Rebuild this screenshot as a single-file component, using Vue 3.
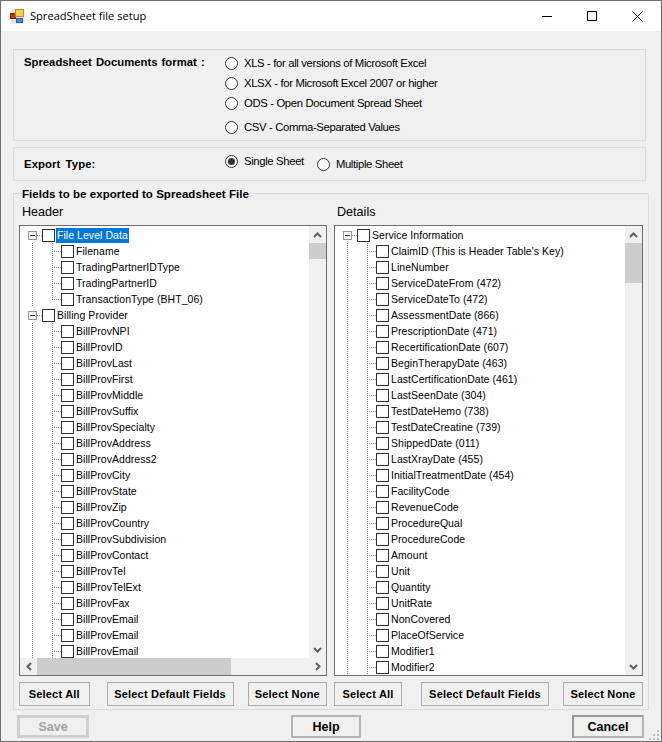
<template>
  <div class="window">
    <header class="titlebar">
      <svg class="app-icon" width="15" height="15" viewBox="0 0 15 15" aria-hidden="true">
        <rect x="0.5" y="0.5" width="14" height="14" fill="#e4e4e4" />
        <rect x="0.5" y="4.5" width="5" height="5" fill="#c8322a" stroke="#7a1f1a" />
        <rect x="5.5" y="0.5" width="8" height="7" fill="#f5cf4f" stroke="#b68a1e" />
        <rect x="6.5" y="9.5" width="6" height="4" fill="#4f86d8" stroke="#2d5ea8" />
      </svg>
      <span class="title">SpreadSheet file setup</span>
      <div class="controls">
        <svg width="10" height="10" viewBox="0 0 10 10" aria-hidden="true"><path d="M0 5.5H10" stroke="#000" fill="none" /></svg>
        <svg width="10" height="10" viewBox="0 0 10 10" aria-hidden="true"><rect x="0.5" y="0.5" width="9" height="9" stroke="#000" fill="none" /></svg>
        <svg width="11" height="11" viewBox="0 0 11 11" aria-hidden="true"><path d="M0.5 0.5L10.5 10.5M10.5 0.5L0.5 10.5" stroke="#000" fill="none" /></svg>
      </div>
    </header>

    <main class="content">
      <section class="group format">
        <div class="group-label">Spreadsheet Documents format :</div>
        <div class="radios">
          <label v-for="f in formats" :key="f.name" class="radio" :class="f.cls">
            <span class="dot"></span>{{ f.name }}
          </label>
        </div>
      </section>

      <section class="group export">
        <div class="group-label">Export Type:</div>
        <div class="export-opts">
          <label class="radio"><span class="dot on"></span>Single Sheet</label>
          <label class="radio lower"><span class="dot"></span>Multiple Sheet</label>
        </div>
      </section>

      <fieldset class="fields">
        <legend>Fields to be exported to Spreadsheet File</legend>
        <div class="columns">
          <div class="col">
            <div class="col-title">Header</div>
            <div class="tree">
              <div class="tree-body">
                <div v-for="(row, i) in headerRows" :key="i" class="row" :class="{ root: row.root }">
                  <template v-if="row.root">
                    <span class="expander"></span>
                    <span class="stub"></span>
                  </template>
                  <template v-else>
                    <span class="guide"></span>
                    <span class="elbow" :class="{ last: row.last }"></span>
                  </template>
                  <span class="check"></span>
                  <span class="text" :class="{ selected: row.selected }">{{ row.text }}</span>
                </div>
              </div>
              <div class="vscroll">
                <span class="arrow"><svg width="9" height="6" viewBox="0 0 9 6"><path d="M1 5L4.5 1.5L8 5" /></svg></span>
                <span class="thumb short"></span>
                <span class="spacer"></span>
                <span class="arrow"><svg width="9" height="6" viewBox="0 0 9 6"><path d="M1 1L4.5 4.5L8 1" /></svg></span>
              </div>
              <div class="hscroll">
                <span class="harrow"><svg width="6" height="9" viewBox="0 0 6 9"><path d="M5 1L1.5 4.5L5 8" /></svg></span>
                <span class="hthumb"></span>
                <span class="spacer"></span>
                <span class="harrow"><svg width="6" height="9" viewBox="0 0 6 9"><path d="M1 1L4.5 4.5L1 8" /></svg></span>
              </div>
            </div>
            <div class="actions left">
              <button class="btn all">Select All</button>
              <button class="btn def">Select Default Fields</button>
              <button class="btn none">Select None</button>
            </div>
          </div>

          <div class="col">
            <div class="col-title">Details</div>
            <div class="tree details">
              <div class="tree-body">
                <div v-for="(row, i) in detailRows" :key="i" class="row" :class="{ root: row.root }">
                  <template v-if="row.root">
                    <span class="expander"></span>
                    <span class="stub"></span>
                  </template>
                  <template v-else>
                    <span class="guide"></span>
                    <span class="elbow"></span>
                  </template>
                  <span class="check"></span>
                  <span class="text">{{ row.text }}</span>
                </div>
              </div>
              <div class="vscroll">
                <span class="arrow"><svg width="9" height="6" viewBox="0 0 9 6"><path d="M1 5L4.5 1.5L8 5" /></svg></span>
                <span class="thumb long"></span>
                <span class="spacer"></span>
                <span class="arrow"><svg width="9" height="6" viewBox="0 0 9 6"><path d="M1 1L4.5 4.5L8 1" /></svg></span>
              </div>
            </div>
            <div class="actions right">
              <button class="btn all2">Select All</button>
              <button class="btn def">Select Default Fields</button>
              <button class="btn none">Select None</button>
            </div>
          </div>
        </div>
      </fieldset>

      <footer class="footer">
        <button class="fbtn save" disabled>Save</button>
        <button class="fbtn help">Help</button>
        <button class="fbtn cancel">Cancel</button>
      </footer>
    </main>

    <svg class="grip" width="11" height="11" viewBox="0 0 11 11" aria-hidden="true">
      <path d="M8 0h2v2H8zM4 4h2v2H4zM8 4h2v2H8zM0 8h2v2H0zM4 8h2v2H4zM8 8h2v2H8z" fill="#bdbdbd" />
    </svg>
  </div>
</template>

<script setup>
const formats = [
  { name: "XLS - for all versions of Microsoft Excel" },
  { name: "XLSX - for Microsoft Excel 2007 or higher" },
  { name: "ODS - Open Document Spread Sheet" },
  { name: "CSV - Comma-Separated Values", cls: "gap" },
];

const billProv = [
  "NPI", "ID", "Last", "First", "Middle", "Suffix", "Specialty", "Address", "Address2",
  "City", "State", "Zip", "Country", "Subdivision", "Contact", "Tel", "TelExt", "Fax",
  "Email", "Email", "Email",
].map((s) => ({ text: "BillProv" + s }));

const headerRows = [
  { text: "File Level Data", root: true, selected: true },
  { text: "Filename" },
  { text: "TradingPartnerIDType" },
  { text: "TradingPartnerID" },
  { text: "TransactionType (BHT_06)", last: true },
  { text: "Billing Provider", root: true },
  ...billProv,
];

const detailRows = [
  { text: "Service Information", root: true },
  ...[
    "ClaimID (This is Header Table's Key)", "LineNumber", "ServiceDateFrom (472)", "ServiceDateTo (472)",
    "AssessmentDate (866)", "PrescriptionDate (471)", "RecertificationDate (607)", "BeginTherapyDate (463)",
    "LastCertificationDate (461)", "LastSeenDate (304)", "TestDateHemo (738)", "TestDateCreatine (739)",
    "ShippedDate (011)", "LastXrayDate (455)", "InitialTreatmentDate (454)", "FacilityCode", "RevenueCode",
    "ProcedureQual", "ProcedureCode", "Amount", "Unit", "Quantity", "UnitRate", "NonCovered",
    "PlaceOfService", "Modifier1", "Modifier2",
  ].map((text) => ({ text })),
];
</script>

<style>
html, body { margin: 0; background: #f0f0f0; }
</style>

<style scoped>
.window {
  position: relative;
  box-sizing: border-box;
  width: 662px;
  height: 742px;
  border: 1px solid #6f6f6f;
  background: #f0f0f0;
  font-family: "Liberation Sans", Arial, sans-serif;
  font-size: 11.3px;
  color: #000;
  overflow: hidden;
}

.titlebar {
  display: flex;
  align-items: center;
  height: 30px;
  background: #fff;
  padding-left: 9px;
}
.app-icon { margin-right: 5px; }
.title { font-family: "Open Sans", sans-serif; font-size: 11.1px; margin-top: -1px; }
.controls {
  display: flex;
  align-items: center;
  margin-left: auto;
  gap: 35px;
  padding-right: 18px;
}

.content { padding: 18px 12px 0 12px; }

.group {
  box-sizing: border-box;
  width: 633px;
  border: 1px solid #dcdcdc;
  display: flex;
}
.group-label {
  width: 201px;
  padding-left: 10px;
  font-weight: bold;
  font-size: 11.3px;
  word-spacing: 1px;
}

.format { height: 92px; padding-top: 6px; }
.radios { display: flex; flex-direction: column; margin-top: -3px; }
.radio {
  display: flex;
  align-items: center;
  height: 20px;
  letter-spacing: -0.35px;
}
.radio.gap { margin-top: 4px; }
.dot {
  box-sizing: border-box;
  width: 13px;
  height: 13px;
  border: 1px solid #333;
  border-radius: 50%;
  background: #fff;
  margin-right: 6px;
  position: relative;
}
.dot.on::after {
  content: "";
  position: absolute;
  inset: 2px;
  border-radius: 50%;
  background: #333;
}

.export { height: 34px; margin-top: 6px; align-items: center; }
.export .group-label { letter-spacing: 0.1px; word-spacing: 2px; }
.export-opts { display: flex; gap: 13px; align-items: flex-start; height: 26px; }
.radio.lower { margin-top: 3px; }

.fields {
  box-sizing: border-box;
  width: 636px;
  height: 524px;
  margin: 5px 0 0;
  padding: 4px 5px 0 5px;
  border: 1px solid #dcdcdc;
  min-width: 0;
}
legend {
  padding: 2px 0 0;
  margin-left: 3px;
  font-weight: bold;
  font-size: 11.5px;
  letter-spacing: 0.05px;
}
.columns {
  display: grid;
  grid-template-columns: 308px 309px;
  gap: 7px;
}
.col-title {
  height: 21px;
  font-size: 12.6px;
  line-height: 16px;
  padding-left: 3px;
}

.tree {
  position: relative;
  box-sizing: border-box;
  height: 451px;
  border: 1px solid #6f6f6f;
  background: #fff;
  display: grid;
  grid-template-columns: 1fr 17px;
  grid-template-rows: 1fr 17px;
  overflow: hidden;
}
.tree.details { grid-template-rows: 1fr; }
.tree-body {
  overflow: hidden;
  padding: 1px 0 0 8px;
}

.row {
  display: flex;
  align-items: center;
  height: 16px;
  white-space: nowrap;
}
.expander {
  box-sizing: border-box;
  flex: none;
  width: 9px;
  height: 9px;
  border: 1px solid #8e9aa8;
  background: linear-gradient(#333, #333) center / 5px 1px no-repeat #f7f7f7;
}
.stub {
  flex: none;
  width: 5px;
  height: 1px;
  background: repeating-linear-gradient(to right, #888 0 1px, transparent 1px 2px);
}
.guide {
  flex: none;
  align-self: stretch;
  width: 20px;
  margin-left: 4px;
  background: repeating-linear-gradient(to bottom, #888 0 1px, transparent 1px 2px) left / 1px 100% no-repeat;
}
.elbow {
  flex: none;
  align-self: stretch;
  width: 9px;
  background:
    repeating-linear-gradient(to bottom, #888 0 1px, transparent 1px 2px) left / 1px 100% no-repeat,
    repeating-linear-gradient(to right, #888 0 1px, transparent 1px 2px) left center / 100% 1px no-repeat;
}
.elbow.last {
  background:
    repeating-linear-gradient(to bottom, #888 0 1px, transparent 1px 2px) left top / 1px 50% no-repeat,
    repeating-linear-gradient(to right, #888 0 1px, transparent 1px 2px) left center / 100% 1px no-repeat;
}
.check {
  box-sizing: border-box;
  flex: none;
  width: 13px;
  height: 13px;
  border: 1px solid #333;
  background: #fff;
}
.text {
  margin-left: 1px;
  padding: 0 1px;
  height: 15px;
  line-height: 15px;
  font-size: 10.5px;
  letter-spacing: 0.05px;
}
.text.selected { background: #0078d7; color: #fff; }

.vscroll {
  display: flex;
  flex-direction: column;
  background: #f0f0f0;
}
.tree:not(.details) .vscroll { grid-row: 1; grid-column: 2; }
.arrow {
  flex: none;
  height: 17px;
  display: flex;
  align-items: center;
  justify-content: center;
}
.thumb { flex: none; background: #cdcdcd; }
.thumb.short { height: 16px; }
.thumb.long { height: 40px; }
.spacer { flex: 1; }
.hscroll {
  grid-column: 1 / span 2;
  display: flex;
  background: #f0f0f0;
}
.harrow {
  flex: none;
  width: 17px;
  display: flex;
  align-items: center;
  justify-content: center;
}
.hthumb { flex: none; width: 194px; background: #cdcdcd; }
.tree svg path { fill: none; stroke: #606060; stroke-width: 2; }

.actions { display: flex; margin-top: 6px; }
.btn {
  box-sizing: border-box;
  height: 24px;
  padding: 0;
  border: 1.5px solid #adadad;
  background: #f0f0f0;
  font: bold 11px "Liberation Sans", Arial, sans-serif;
  letter-spacing: 0.2px;
  color: #000;
}
.btn.all { width: 71px; }
.btn.all2 { width: 68px; }
.btn.def { width: 128px; }
.btn.none { width: 80px; }
.actions.left .btn.def { margin-left: 17px; }
.actions.left .btn.none { margin-left: 14px; }
.actions.right .btn.def { margin-left: 19px; }
.actions.right .btn.none { margin-left: 14px; }

.footer { display: flex; margin-top: 5px; padding-left: 4px; }
.fbtn {
  box-sizing: border-box;
  width: 72px;
  height: 23px;
  padding: 0;
  border: 2px solid #b4b4b4;
  background: #f0f0f0;
  font: bold 12.5px "Liberation Sans", Arial, sans-serif;
  color: #000;
}
.fbtn.save { border: 3px solid #cfcfcf; color: #a0a0a0; }
.fbtn.help { width: 70px; margin-left: 202px; }
.fbtn.cancel { margin-left: 211px; border-color: #9a9a9a #b4b4b4 #b4b4b4 #9a9a9a; }

.grip { position: absolute; right: 1px; bottom: 0; }
</style>
